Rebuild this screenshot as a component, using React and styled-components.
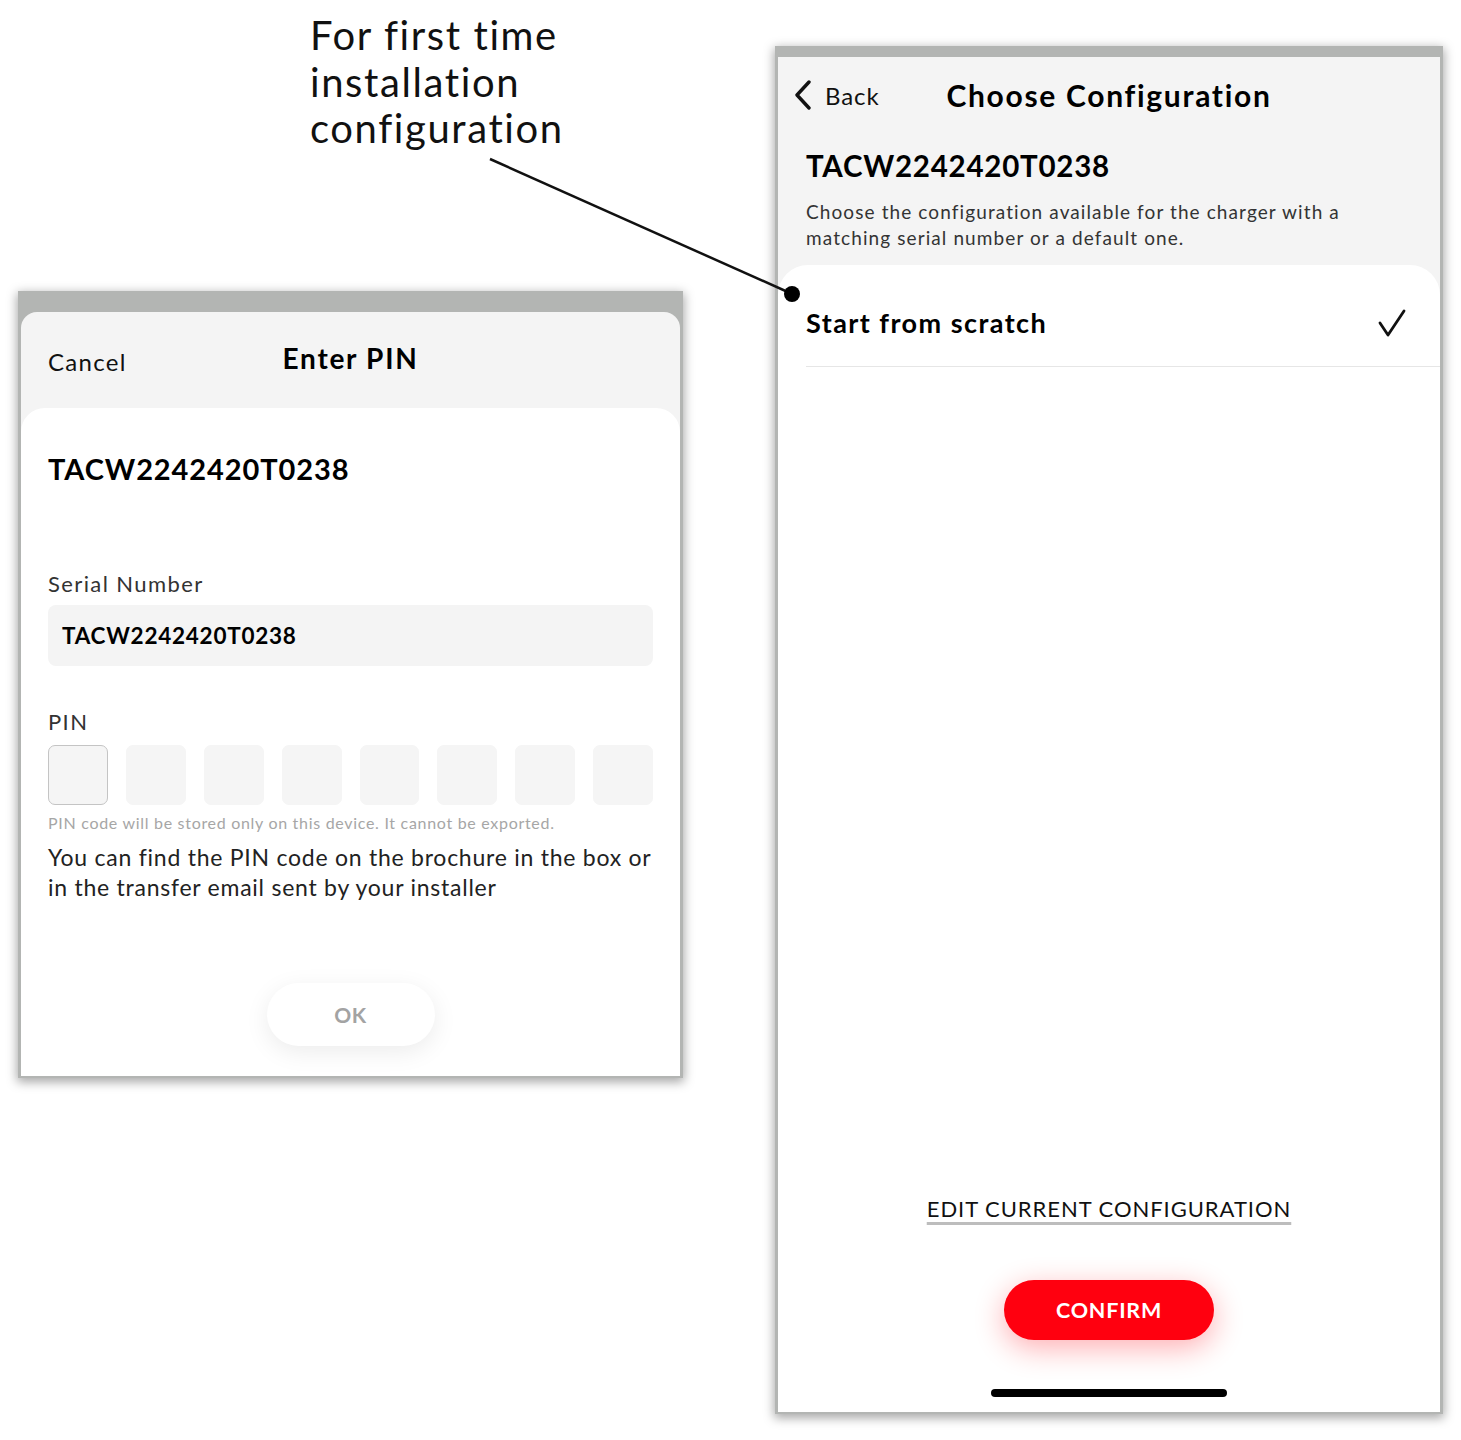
import React from "react";
import styled, { createGlobalStyle } from "styled-components";

const Global = createGlobalStyle`
  html, body { margin: 0; padding: 0; background: #ffffff; }
  body { font-family: Lato, "Open Sans", sans-serif; color: #111; }
  * { box-sizing: border-box; }
`;

const Canvas = styled.div`
  position: relative;
  width: 1461px;
  height: 1440px;
  display: flex;
  align-items: flex-start;
  padding-left: 18px;
  gap: 92px;
  background: #fff;
`;

const LeftColumn = styled.div`
  width: 665px;
  display: flex;
  flex-direction: column;
`;

const RightColumn = styled.div`
  width: 668px;
  padding-top: 46px;
`;

const Annotation = styled.div`
  margin-left: 292px;
  padding-top: 12px;
  margin-bottom: 139px;
  font-size: 40px;
  line-height: 46.5px;
  color: #111;
  letter-spacing: 1.6px;
`;

const Frame = styled.div`
  background: #b3b5b3;
  padding: ${(p) => p.$top}px 3px 2px 3px;
  box-shadow: 0 3px 10px 1px rgba(0, 0, 0, 0.35);
`;

const Sheet = styled.div`
  background: #f4f4f4;
  border-radius: ${(p) => (p.$rounded ? "16px 16px 0 0" : "0")};
  display: flex;
  flex-direction: column;
  overflow: hidden;
`;

/* ---------- Enter PIN sheet ---------- */

const ModalHeader = styled.div`
  height: 96px;
  position: relative;
  display: flex;
  align-items: center;
  padding: 4px 27px 0;
`;

const HeaderLink = styled.span`
  font-size: 24px;
  letter-spacing: 1.3px;
  color: #111;
`;

const ModalTitle = styled.span`
  position: absolute;
  left: 0;
  right: 0;
  top: 29px;
  text-align: center;
  font-size: 28px;
  font-weight: 700;
  letter-spacing: 1.7px;
  color: #000;
  pointer-events: none;
`;

const Card = styled.div`
  background: #fff;
  border-radius: ${(p) => p.$radius}px ${(p) => p.$radius}px 0 0;
  height: ${(p) => p.$height}px;
  display: flex;
  flex-direction: column;
`;

const PinBody = styled.div`
  padding: 44px 27px 0;
  display: flex;
  flex-direction: column;
`;

const SerialTitle = styled.div`
  font-size: ${(p) => p.$size || 29}px;
  line-height: 34px;
  font-weight: 700;
  letter-spacing: ${(p) => p.$spacing}px;
  color: #000;
`;

const FieldLabel = styled.div`
  font-size: 22px;
  line-height: 28px;
  letter-spacing: 1.4px;
  color: #333;
  margin-top: ${(p) => p.$mt}px;
`;

const InputBox = styled.div`
  margin-top: 7px;
  height: 61px;
  border-radius: 8px;
  background: #f4f4f4;
  display: flex;
  align-items: center;
  padding-left: 14px;
  font-size: 22.5px;
  font-weight: 700;
  letter-spacing: 0.75px;
  color: #000;
`;

const PinRow = styled.div`
  margin-top: 9px;
  display: grid;
  grid-template-columns: repeat(8, 1fr);
  column-gap: 18px;
`;

const PinCell = styled.div`
  height: 60px;
  border-radius: 7px;
  background: #f5f5f5;
  border: 1.5px solid ${(p) => (p.$active ? "#c4c4c4" : "#f5f5f5")};
`;

const Note = styled.div`
  margin-top: 8px;
  font-size: 16px;
  line-height: 20px;
  letter-spacing: 0.7px;
  color: #a6a6a6;
`;

const Help = styled.div`
  margin-top: 9px;
  font-size: 23px;
  line-height: 30px;
  letter-spacing: 0.75px;
  color: #222;
`;

const OkButton = styled.button`
  align-self: center;
  margin-top: 81px;
  width: 168px;
  height: 63px;
  border: none;
  border-radius: 32px;
  background: #fff;
  box-shadow: 0 6px 24px rgba(0, 0, 0, 0.08);
  font-family: inherit;
  font-size: 21px;
  font-weight: 700;
  color: #a3a3a3;
  letter-spacing: 0.5px;
`;

/* ---------- Choose Configuration screen ---------- */

const ConfigHeader = styled.div`
  height: 208px;
  padding: 18px 0 0;
  display: flex;
  flex-direction: column;
`;

const NavBar = styled.div`
  height: 40px;
  display: grid;
  grid-template-columns: 1fr auto 1fr;
  align-items: center;
  padding-left: 16px;
`;

const BackLink = styled.div`
  display: flex;
  align-items: center;
  gap: 13px;
  font-size: 24px;
  color: #111;
  letter-spacing: 0.9px;
`;

const NavTitle = styled.div`
  font-size: 30px;
  font-weight: 700;
  color: #000;
  letter-spacing: 1.7px;
  margin-left: -16px;
`;

const ConfigIntro = styled.div`
  padding: 34px 28px 0;
`;

const Description = styled.div`
  margin-top: 16px;
  font-size: 19px;
  line-height: 26px;
  color: #333;
  letter-spacing: 1.1px;
`;

const OptionRow = styled.div`
  margin-left: 28px;
  height: 102px;
  padding: 14px 34px 0 0;
  display: flex;
  align-items: center;
  justify-content: space-between;
  border-bottom: 1px solid #e6e6e6;
`;

const OptionLabel = styled.span`
  font-size: 27px;
  font-weight: 700;
  color: #000;
  letter-spacing: 1.45px;
`;

const Spacer = styled.div`
  flex: 1;
`;

const Footer = styled.div`
  display: flex;
  flex-direction: column;
  align-items: center;
`;

const EditLink = styled.a`
  font-size: 22px;
  line-height: 28px;
  color: #111;
  letter-spacing: 0.95px;
  text-decoration: underline;
  text-decoration-color: #bdbdbd;
  text-decoration-thickness: 3px;
  text-underline-offset: 5px;
  margin-bottom: 57px;
`;

const ConfirmButton = styled.button`
  width: 210px;
  height: 60px;
  border: none;
  border-radius: 30px;
  background: #ff000f;
  color: #fff;
  font-family: inherit;
  font-size: 21.5px;
  font-weight: 700;
  letter-spacing: 0.8px;
  box-shadow: 0 8px 30px rgba(255, 0, 15, 0.32);
  margin-bottom: 49px;
`;

const HomeIndicator = styled.div`
  width: 236px;
  height: 8px;
  border-radius: 4px;
  background: #000;
  margin-bottom: 15px;
`;

const Leader = styled.svg`
  position: absolute;
  left: 0;
  top: 0;
  pointer-events: none;
`;

const ChevronLeft = () => (
  <svg width="18" height="30" viewBox="0 0 18 30" fill="none">
    <path d="M15 2 L3 15 L15 28" stroke="#111" strokeWidth="3.4" strokeLinecap="round" strokeLinejoin="round" />
  </svg>
);

const Check = () => (
  <svg width="28" height="28" viewBox="0 0 28 28" fill="none">
    <path d="M2 14 L10 26 L26 2" stroke="#111" strokeWidth="2.8" strokeLinecap="round" strokeLinejoin="round" />
  </svg>
);

export default function App() {
  const serial = "TACW2242420T0238";
  return (
    <>
      <Global />
      <Canvas>
        <LeftColumn>
          <Annotation>
            For first time
            <br />
            installation
            <br />
            configuration
          </Annotation>
          <Frame $top={21}>
            <Sheet $rounded>
              <ModalHeader>
                <HeaderLink>Cancel</HeaderLink>
                <ModalTitle>Enter PIN</ModalTitle>
              </ModalHeader>
              <Card $radius={24} $height={668}>
                <PinBody>
                  <SerialTitle $spacing={0.9}>{serial}</SerialTitle>
                  <FieldLabel $mt={84}>Serial Number</FieldLabel>
                  <InputBox>{serial}</InputBox>
                  <FieldLabel $mt={42}>PIN</FieldLabel>
                  <PinRow>
                    {Array.from({ length: 8 }).map((_, i) => (
                      <PinCell key={i} $active={i === 0} />
                    ))}
                  </PinRow>
                  <Note>PIN code will be stored only on this device. It cannot be exported.</Note>
                  <Help>
                    You can find the PIN code on the brochure in the box or
                    <br />
                    in the transfer email sent by your installer
                  </Help>
                  <OkButton>OK</OkButton>
                </PinBody>
              </Card>
            </Sheet>
          </Frame>
        </LeftColumn>

        <RightColumn>
          <Frame $top={11}>
            <Sheet>
              <ConfigHeader>
                <NavBar>
                  <BackLink>
                    <ChevronLeft />
                    Back
                  </BackLink>
                  <NavTitle>Choose Configuration</NavTitle>
                  <span />
                </NavBar>
                <ConfigIntro>
                  <SerialTitle $size={29.5} $spacing={0.75}>
                    {serial}
                  </SerialTitle>
                  <Description>
                    Choose the configuration available for the charger with a
                    <br />
                    matching serial number or a default one.
                  </Description>
                </ConfigIntro>
              </ConfigHeader>
              <Card $radius={30} $height={1147}>
                <OptionRow>
                  <OptionLabel>Start from scratch</OptionLabel>
                  <Check />
                </OptionRow>
                <Spacer />
                <Footer>
                  <EditLink>EDIT CURRENT CONFIGURATION</EditLink>
                  <ConfirmButton>CONFIRM</ConfirmButton>
                  <HomeIndicator />
                </Footer>
              </Card>
            </Sheet>
          </Frame>
        </RightColumn>

        <Leader width="1461" height="1440" viewBox="0 0 1461 1440">
          <line x1="490" y1="159" x2="790" y2="293" stroke="#111" strokeWidth="2.5" />
          <circle cx="792" cy="294" r="8" fill="#000" />
        </Leader>
      </Canvas>
    </>
  );
}
